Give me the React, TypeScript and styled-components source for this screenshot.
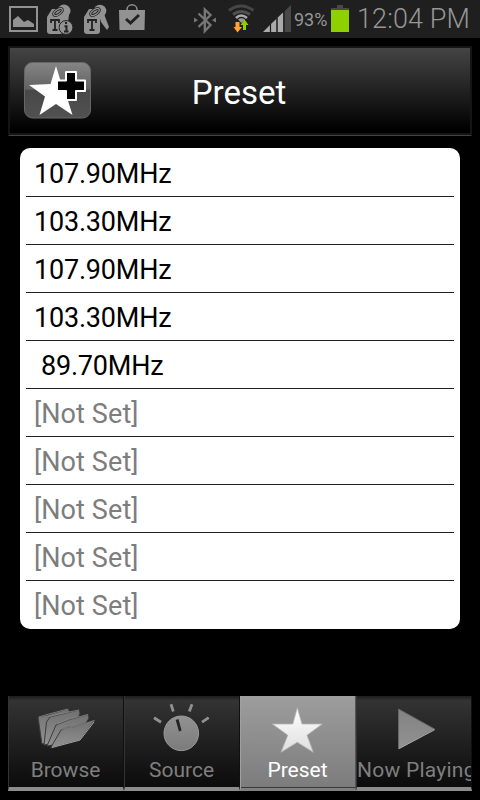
import React from "react";
import styled, { createGlobalStyle } from "styled-components";

const GlobalStyle = createGlobalStyle`
  * { box-sizing: border-box; }
  html, body { margin: 0; background: #000; overflow: hidden; }
  body { font-family: Roboto, "Noto Sans", sans-serif; }
  svg { display: block; flex: none; }
`;

const Screen = styled.main`
  width: 480px;
  height: 800px;
  display: flex;
  flex-direction: column;
  background: #000;
  overflow: hidden;
`;

const StatusBar = styled.header`
  height: 38px;
  flex: none;
  display: flex;
  align-items: flex-start;
  background: #1f1f1f;
  color: #969696;
`;

const BatteryLevel = styled.span`
  width: 34px;
  padding-top: 5px;
  font-size: 18px;
  line-height: 30px;
  white-space: nowrap;
`;

const Clock = styled.time`
  margin-left: 5px;
  padding-top: 4px;
  font-size: 27px;
  line-height: 30px;
  font-weight: 300;
  letter-spacing: 0.1px;
  white-space: nowrap;
`;

const TitleBar = styled.section`
  margin: 8px 8px 0;
  height: 90px;
  flex: none;
  display: grid;
  grid-template-columns: 80px 1fr 80px;
  align-items: center;
  border: 2px solid #151515;
  border-bottom: 1px solid #444;
  background: linear-gradient(#444 0%, #2b2b2b 36%, #000 94%, #000 97.5%, #151515 98%);
`;

const AddButton = styled.button`
  margin: 0 0 3px 13px;
  padding: 0;
  width: 70px;
  height: 58px;
  border: 0;
  background: none;
`;

const Title = styled.h1`
  margin: 3px 2px 0 0;
  text-align: center;
  color: #fff;
  font-size: 33px;
  font-weight: 400;
  line-height: 40px;
`;

const PresetList = styled.ul`
  margin: 12px 20px 0;
  padding: 0 6px;
  height: 481px;
  flex: none;
  list-style: none;
  background: #fff;
  border-radius: 10px;
`;

const PresetRow = styled.li<{ $empty: boolean; $indent: boolean }>`
  height: 48px;
  padding: 2px 0 0 ${(p) => (p.$indent ? 15 : 8)}px;
  line-height: 48px;
  font-size: 27px;
  letter-spacing: ${(p) => (p.$empty ? 0.1 : -0.2)}px;
  white-space: nowrap;
  color: ${(p) => (p.$empty ? "#7d7d7d" : "#000")};
  box-shadow: 0 1px 0 #222;
  &:last-child { box-shadow: none; }
`;

const TabBar = styled.nav`
  margin: 67px 8px 0;
  height: 95px;
  flex: none;
  display: grid;
  grid-template-columns: repeat(4, 116px);
`;

const Tab = styled.button<{ $active: boolean }>`
  height: 95px;
  min-width: 0;
  padding: 0;
  margin: 0;
  display: flex;
  flex-direction: column;
  align-items: center;
  overflow: hidden;
  font-family: inherit;
  border: 0;
  border-left: 1px solid ${(p) => (p.$active ? "#a0a0a0" : "#333")};
  border-right: 1px solid ${(p) => (p.$active ? "#555" : "#101010")};
  border-bottom: ${(p) => (p.$active ? "3px solid #808080" : "4px solid #8c8c8c")};
  box-shadow: ${(p) => (p.$active ? "inset 0 -1px 0 #3a3a3a" : "none")};
  background: ${(p) =>
    p.$active ? "linear-gradient(#9d9d9d, #7c7c7c)" : "linear-gradient(#1c1c1c, #333 5%, #0c0c0c 98%)"};
  background-clip: padding-box;
  color: ${(p) => (p.$active ? "#fff" : "#7f7f7f")};
`;

const TabLabel = styled.span<{ $long: boolean }>`
  width: 100%;
  padding-right: 1px;
  text-align: ${(p) => (p.$long ? "left" : "center")};
  font-size: 21px;
  letter-spacing: ${(p) => (p.$long ? 0.25 : 0)}px;
  line-height: 26px;
  white-space: nowrap;
`;

const PictureIcon = () => (
  <svg width="45" height="38">
    <path d="M10 7H37V31H10Z" fill="none" stroke="#929292" strokeWidth="2" />
    <path d="M13 27V20L18 16L22 20L24 22L28 20L34 24V27Z" fill="#929292" />
  </svg>
);

const TagShape = () => (
  <>
    <path d="M47 17L52 9H58L63 17V31Q63 34 60 34H50Q47 34 47 31Z" fill="#929292" />
    <ellipse cx="58" cy="12" rx="5" ry="2.3" transform="rotate(-35 58 12)" fill="none" stroke="#222" strokeWidth="2.8" />
    <ellipse cx="58" cy="12" rx="5" ry="2.3" transform="rotate(-35 58 12)" fill="none" stroke="#929292" strokeWidth="1.2" />
    <path d="M51 23V20H59V23M55 20V30M52.5 30H57.5" fill="none" stroke="#222" strokeWidth="1.8" />
  </>
);

const TagInfoIcon = () => (
  <svg width="34" height="38" viewBox="45 0 34 38">
    <circle cx="64" cy="11" r="6.5" fill="#929292" />
    <path d="M62 15L69 15L68 22L63 22Z" fill="#929292" />
    <TagShape />
    <circle cx="66" cy="27.5" r="6.9" fill="#929292" stroke="#222" />
    <path d="M66 22V24M64.5 26.2H66.5V31M64 31.4H68.5" fill="none" stroke="#222" strokeWidth="2" />
  </svg>
);

const TagKeyIcon = () => (
  <svg width="36" height="38" viewBox="79 0 36 38">
    <circle cx="100" cy="11" r="6.3" fill="#929292" />
    <path d="M99 15L104 14L109 27L107 30L104 26L101 22Z" fill="#929292" />
    <g transform="translate(37 0)"><TagShape /></g>
  </svg>
);

const BagIcon = () => (
  <svg width="37" height="38">
    <path d="M12 11V9.5A5 4.7 0 0 1 22 9.5V11" fill="none" stroke="#929292" strokeWidth="1.5" />
    <path d="M4 10H30L29.5 30H4.5Z" fill="#929292" />
    <path d="M11 19L15.5 23L24 15" fill="none" stroke="#222" strokeWidth="3" />
  </svg>
);

const RadioIcons = () => (
  <svg width="142" height="38" viewBox="152 0 142 38">
    <path d="M198.5 13.5L210.5 25L204.8 31V9.5L210.5 15L198.5 27" fill="none" stroke="#767676" strokeWidth="2.4" />
    <path d="M194 17.5V22.5L198 20.2ZM216 17.5V22.5L212 20.2Z" fill="#767676" />
    <path d="M229 10.5Q241 1.5 253.5 10.5" fill="none" stroke="#464646" strokeWidth="3" />
    <path d="M233 14.5Q241 8.5 250 14.5" fill="none" stroke="#505050" strokeWidth="3" />
    <path d="M236 18Q241 13 247 18" fill="none" stroke="#aaa" strokeWidth="2.5" />
    <path d="M238 19.5Q241.5 17 245 19.5L241.5 23Z" fill="#999" />
    <path d="M235.5 22H239.5V27H242L237.5 32.5L233.5 27H235.5Z" fill="#ffa332" />
    <path d="M243 30V25H240.5L244.5 19.5L248.5 25H246V30Z" fill="#8fd000" />
    <path d="M263 32L291 5V32Z" fill="#484848" />
    <path d="M263 32L270 25V32ZM271 24L276.5 18.7V32H271ZM277.5 17.7L283 12.5V32H277.5Z" fill="#aaa" />
    <path d="M270.5 24.5V32M277 18V32M284 11V32" stroke="#1a1a1a" strokeWidth="1.2" />
  </svg>
);

const BatteryIcon = () => (
  <svg width="24" height="38" viewBox="328 0 24 38">
    <path d="M331 8H337V5H343V8H349V10H331Z" fill="#484848" />
    <path d="M331 10H349V32H331Z" fill="#8fd000" />
  </svg>
);

const AddPresetIcon = () => (
  <svg width="70" height="58" viewBox="0 0 70 58">
    <defs>
      <linearGradient id="key" x2="0" y2="1">
        <stop stopColor="#858585" />
        <stop offset=".48" stopColor="#626262" />
        <stop offset=".5" stopColor="#484848" />
        <stop offset="1" stopColor="#515151" />
      </linearGradient>
    </defs>
    <rect x="1.5" y="1.5" width="66" height="55.5" rx="8" fill="url(#key)" stroke="#666" />
    <path d="M33 5L38.5 23L58 23L43.5 35L49.5 54L33 43L16.5 54L22 35.5L6 24L27.5 23Z" fill="#fff" />
    <path d="M43 11H53V19.5H62V30H53V39H43V30H34V19.5H43Z" fill="#000" stroke="#fff" strokeWidth="2" strokeLinejoin="round" />
  </svg>
);

const SteelGradient = ({ id, from = "#777", to = "#a0a0a0" }: { id: string; from?: string; to?: string }) => (
  <defs>
    <linearGradient id={id} x2="0" y2="1">
      <stop stopColor={from} />
      <stop offset="1" stopColor={to} />
    </linearGradient>
  </defs>
);

const FoldersIcon = () => (
  <svg width="116" height="61">
    <SteelGradient id="folder" from="#707070" to="#929292" />
    <g fill="url(#folder)" stroke="#3c3c3c" strokeWidth="1" strokeLinejoin="round">
      <path d="M34 48L30 21L39 19L60 13L62 16L56 42Z" />
      <path d="M36 49L38.5 26L42 21L54 18L71 14L72 17L62 44Z" />
      <path d="M39 50L48 29L60 24L80 18.5L81 22L67 45Z" />
      <path d="M42.5 52L53 34L60 31L64 31.5L87 24L72 44Z" />
    </g>
    <path d="M31 21L39 18.5L60 13M42 20.5L54 17.5L71 14M49 28L60 23.5L80 18.5M54 33.5L60 31L64 31.5L86.5 24.5" fill="none" stroke="#929292" strokeWidth=".7" />
    <path d="M86 26L72 44L44 51.5" fill="none" stroke="#a4a4a4" strokeWidth="1" />
  </svg>
);

const DialIcon = () => (
  <svg width="116" height="61">
    <SteelGradient id="dial" from="#929292" to="#7b7b7b" />
    <circle cx="57.3" cy="37.3" r="17.3" fill="url(#dial)" stroke="#999" />
    <path d="M51.7 24L54.5 23L57.5 34.5L55 35.5Z" fill="#242424" />
    <path d="M30 21.7L37 26.2M47 8.3L49.3 15.5M68 8.3L65.3 15.5M84.7 21.7L78 26.2" stroke="#919191" strokeWidth="2.8" />
  </svg>
);

const StarIcon = () => (
  <svg width="116" height="61">
    <SteelGradient id="star" from="#fff" to="#dedede" />
    <path d="M57.3 11.7L62 28L82.3 28L67 39.2L73.3 56.3L57.3 46.3L41 56.3L47.8 39.2L32.3 28L52.8 28Z" fill="url(#star)" stroke="#b4b4b4" strokeWidth=".8" />
  </svg>
);

const PlayIcon = () => (
  <svg width="116" height="61">
    <SteelGradient id="play" from="#838383" to="#919191" />
    <path d="M42.5 13L79 33.3L42.5 53Z" fill="url(#play)" stroke="#666" />
    <path d="M43 52.5L78.5 33.8" stroke="#aaa" />
  </svg>
);

const presets: (string | null)[] = [
  "107.90MHz", "103.30MHz", "107.90MHz", "103.30MHz", "89.70MHz", null, null, null, null, null,
];

const tabs = [
  { label: "Browse", Icon: FoldersIcon },
  { label: "Source", Icon: DialIcon },
  { label: "Preset", Icon: StarIcon },
  { label: "Now Playing", Icon: PlayIcon },
];

export default function App() {
  return (
    <Screen>
      <GlobalStyle />
      <StatusBar>
        <PictureIcon />
        <TagInfoIcon />
        <TagKeyIcon />
        <BagIcon />
        <RadioIcons />
        <BatteryLevel>93%</BatteryLevel>
        <BatteryIcon />
        <Clock>12:04 PM</Clock>
      </StatusBar>
      <TitleBar>
        <AddButton aria-label="Add preset"><AddPresetIcon /></AddButton>
        <Title>Preset</Title>
      </TitleBar>
      <PresetList>
        {presets.map((name, i) => (
          <PresetRow key={i} $empty={!name} $indent={name === "89.70MHz"}>
            {name ?? "[Not Set]"}
          </PresetRow>
        ))}
      </PresetList>
      <TabBar>
        {tabs.map(({ label, Icon }) => (
          <Tab key={label} $active={label === "Preset"}>
            <Icon />
            <TabLabel $long={label.length > 8}>{label}</TabLabel>
          </Tab>
        ))}
      </TabBar>
    </Screen>
  );
}
